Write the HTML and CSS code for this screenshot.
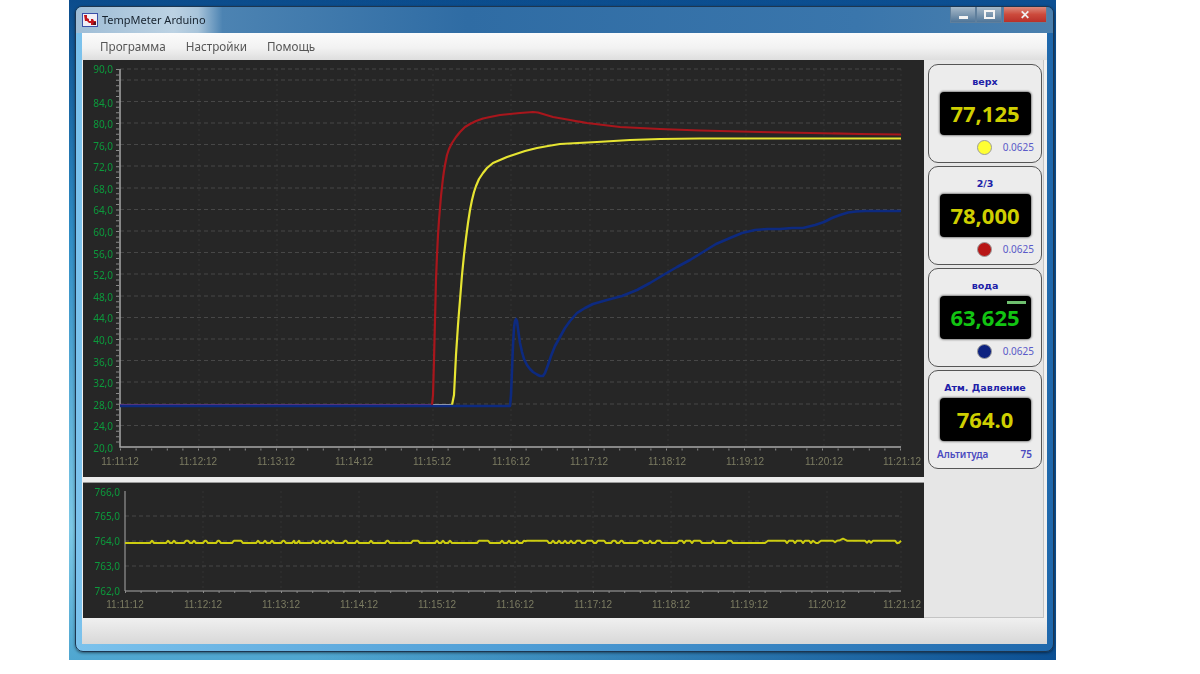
FILE: index.html
```html
<!DOCTYPE html>
<html lang="ru">
<head>
  <meta charset="UTF-8">
  <title>TempMeter Arduino</title>
  <link rel="stylesheet" href="styles.css">
</head>
<body>
  <div class="desktop">
    <div class="window">

      <!-- Title bar -->
      <div class="titlebar">
        <svg class="app-icon" width="16" height="14" viewBox="0 0 16 14">
          <rect x="0.5" y="0.5" width="15" height="13" fill="#f0eef6" stroke="#3a4fa8"/>
          <path d="M2 2h3v3l2 1v2h2V6h2l1 2h2v4H9v-2H7L5 8H3z" fill="#c4141c"/>
          <path d="M12 9h2v3h-3z" fill="#5a1420"/>
        </svg>
        <span class="title-text">TempMeter Arduino</span>
        <div class="caption-btns">
          <div class="cap-btn cap-min"><span class="glyph-min"></span></div>
          <div class="cap-btn cap-max"><span class="glyph-max"></span></div>
          <div class="cap-btn cap-close">✕</div>
        </div>
      </div>

      <div class="client">
        <!-- Menu -->
        <div class="menubar">
          <span class="menu-item">Программа</span>
          <span class="menu-item">Настройки</span>
          <span class="menu-item">Помощь</span>
        </div>

        <div class="main">
          <div class="charts">
            <!-- Temperature chart -->
            <svg class="chart" width="841" height="417" viewBox="83 60 841 417">
              <path class="grid-v" d="M199 69V447M277 69V447M355 69V447M433 69V447M511 69V447M590 69V447M668 69V447M746 69V447M824 69V447M901 69V447"/>
              <path class="grid-h" d="M120 69H901M120 80H901M120 101.500H901M120 123H901M120 144.500H901M120 166H901M120 188H901M120 209.500H901M120 231H901M120 252.500H901M120 274H901M120 296H901M120 317.500H901M120 339H901M120 360.500H901M120 382H901M120 404H901M120 425.500H901"/>
              <path class="axis" d="M120 69V447H901"/>
              <path class="ticks-y" d="M117.500 69V447"/>
              <path class="ticks-x" d="M120 449.500H901"/>

              <path class="trace-base" d="M120 404.500H433"/>
              <path class="trace-base-light" d="M433 404.500H453"/>
              <path class="trace red" d="M432 405L433 395 434 360 435 320 436 280 437 255 438 235 439 220 440 208 441 196 442 187 443 178 444 171 445 165 447 155 449 149 452 143 456 137 460 132 465 127 470 124 476 121 483 118.500 490 117 500 115 510 114 520 113 533 112 538 112.500 543 114 553 117 570 120 587 123 620 127 660 129 700 130.500 760 132 810 133 860 134 901 134.500"/>
              <path class="trace yellow" d="M452 405L454 395 455 375 456 355 457 340 458 325 459 312 460 300 462 275 464 255 466 238 468 223 470 210 472 200 474 192 476 186 479 179 483 173 487 168 493 163 500 160 507 157 513 155 525 151 537 148 548 146 560 144 578 143 597 142 630 140 660 139 700 138.500H901"/>
              <path class="trace blue" d="M120 406H510L511 395 512 370 513 345 514 328 515 321 516 319 517 321 518 329 519 336 520 343 522 352 524 359 527 365 530 369 533 372 537 374.500 540 376 543 376 545 373 548 365 551 356 555 346 560 337 565 328 570 321 577 313 585 308 593 304 607 300 622 296 637 290 650 283 665 274 677 267 690 260 703 252 716 244 730 238 742 233 755 230 767 229 780 229 792 228 803 228 815 225 824 222 832 218 840 215 848 212.500 856 211.500 865 211H901"/>

              <g class="lbl-y">
                <text x="113" y="73">90,0</text>
                <text x="113" y="107">84,0</text>
                <text x="113" y="128">80,0</text>
                <text x="113" y="150">76,0</text>
                <text x="113" y="171">72,0</text>
                <text x="113" y="193">68,0</text>
                <text x="113" y="214">64,0</text>
                <text x="113" y="236">60,0</text>
                <text x="113" y="258">56,0</text>
                <text x="113" y="279">52,0</text>
                <text x="113" y="301">48,0</text>
                <text x="113" y="322">44,0</text>
                <text x="113" y="344">40,0</text>
                <text x="113" y="366">36,0</text>
                <text x="113" y="387">32,0</text>
                <text x="113" y="409">28,0</text>
                <text x="113" y="430">24,0</text>
                <text x="113" y="452">20,0</text>
              </g>
              <g class="lbl-x">
                <text x="120" y="465">11:11:12</text>
                <text x="198" y="465">11:12:12</text>
                <text x="276" y="465">11:13:12</text>
                <text x="354" y="465">11:14:12</text>
                <text x="432" y="465">11:15:12</text>
                <text x="511" y="465">11:16:12</text>
                <text x="589" y="465">11:17:12</text>
                <text x="667" y="465">11:18:12</text>
                <text x="745" y="465">11:19:12</text>
                <text x="824" y="465">11:20:12</text>
                <text x="902" y="465">11:21:12</text>
              </g>
            </svg>

            <div class="splitter"></div>

            <!-- Pressure chart -->
            <svg class="chart" width="841" height="135" viewBox="83 483 841 135">
              <path class="grid-v" d="M203 491V591M281 491V591M359 491V591M437 491V591M515 491V591M593 491V591M671 491V591M749 491V591M827 491V591M901 491V591"/>
              <path class="grid-h" d="M125 516H901M125 541H901M125 566H901"/>
              <path class="axis-thin" d="M125 491V591H901"/>
              <path class="ticks-x" d="M125 592H901"/>
              <path class="trace-thin" d="M125 543H150l2-2.300 2 2.300H166l2-2.300 2 2.300H172l2-2.300 2 2.300H184l2-2.300H188l2 2.300H192l2-2.300 2 2.300H203l2-2.300H206l2 2.300H216l2-2.300H219l2 2.300H232l2-2.300H241l2 2.300H256l2-2.300 2 2.300H263l2-2.300 2 2.300H270l2-2.300 2 2.300H281l2-2.300H284l2 2.300H292l2-2.300 1 2.300H297l2-2.300 1 2.300H311l2-2.300 2 2.300H318l2-2.300 2 2.300H325l2-2.300 2 2.300H331l2-2.300 2 2.300H343l2-2.300H346l2 2.300H355l2-2.300 2 2.300H369l2-2.300 2 2.300H385l2-2.300H388l2 2.300H411l2-2.300H418l2 2.300H435l2-2.300 2 2.300H441l2-2.300 2 2.300H448l2-2.300 2 2.300H477l2-2.300H488l2 2.300H500l2-2.300 2 2.300H507l2-2.300 2 2.300H515l2-2.300 2 2.300H522l2-2.300 2 .500 1-.500H547l2 2.300H551l2-2.300 2 2.300H557l2-2.300 2 2.300H563l2-2.300 2 2.300H569l2-2.300 2 2.300H575l2-2.300H580l2 2.300H585l2-2.300H592l2 2.300H596l2-2.300H604l2 2.300H611l2-2.300H615l2 2.300H619l2-2.300H622l2 2.300H637l2-2.300H642l2 2.300H648l2-2.300 2 2.300H655l2-2.300H660l2 2.300H677l2-2.300H682l2 2.300 2-2.300H690l2 2.300 2-2.300H700l2 2.300H711l2-2.300 2 2.300H726l2-2.300H731l2 2.300H765l3-2.300H785l2 2.300 2-2.300H793l2 2.300 2-2.300H801l2 2.300 2-2.300H809l2 2.300 2-2.300 3 2.300H818l3-2.300H833l2 1.500 2-1.500 3-.500 3-1.500 3 1.500 1 .500H865l2 2 2-2 2 2 2-2H895l2 2.500 2-.500 2-2"/>

              <g class="lbl-y">
                <text x="120" y="496">766,0</text>
                <text x="120" y="520">765,0</text>
                <text x="120" y="545">764,0</text>
                <text x="120" y="570">763,0</text>
                <text x="120" y="595">762,0</text>
              </g>
              <g class="lbl-x">
                <text x="125" y="608">11:11:12</text>
                <text x="203" y="608">11:12:12</text>
                <text x="281" y="608">11:13:12</text>
                <text x="359" y="608">11:14:12</text>
                <text x="437" y="608">11:15:12</text>
                <text x="515" y="608">11:16:12</text>
                <text x="593" y="608">11:17:12</text>
                <text x="671" y="608">11:18:12</text>
                <text x="749" y="608">11:19:12</text>
                <text x="827" y="608">11:20:12</text>
                <text x="902" y="608">11:21:12</text>
              </g>
            </svg>
          </div>

          <!-- Sensor cards -->
          <div class="panel">
            <div class="card">
              <div class="card-title">верх</div>
              <div class="display">77,125</div>
              <div class="card-foot">
                <span class="led led-yellow"></span>
                <span class="res">0.0625</span>
              </div>
            </div>
            <div class="card">
              <div class="card-title">2/3</div>
              <div class="display">78,000</div>
              <div class="card-foot">
                <span class="led led-red"></span>
                <span class="res">0.0625</span>
              </div>
            </div>
            <div class="card">
              <div class="card-title">вода</div>
              <div class="display display-green">63,625<span class="heat-bar"></span></div>
              <div class="card-foot">
                <span class="led led-blue"></span>
                <span class="res">0.0625</span>
              </div>
            </div>
            <div class="card">
              <div class="card-title">Атм. Давление</div>
              <div class="display">764.0</div>
              <div class="card-foot card-foot-alt">
                <span class="alt-label">Альтитуда</span>
                <span class="alt-label">75</span>
              </div>
            </div>
          </div>
        </div>

        <div class="statusbar"></div>
      </div>
    </div>
  </div>
</body>
</html>
```

FILE: styles.css
```css
body {
  margin: 0;
  background-color: white;
  font-family: "Noto Sans", sans-serif;
}

.desktop {
  box-sizing: border-box;
  width: 987px;
  height: 660px;
  margin-left: 69px;
  padding: 6px 2px 8px 6px;
  background:
    linear-gradient(to right, rgba(12, 79, 146, 0) 25%, #0c4f92 100%),
    linear-gradient(to bottom, #0b4c8c 0%, #2f8cc4 35%, #7cc8e6 80%, #4fa6d0 100%);
}

/* whole window is slightly soft in the reference, it is a rescaled screenshot */
.window {
  box-sizing: border-box;
  height: 646px;
  display: flex;
  flex-direction: column;
  padding: 0 6px 7px 6px;
  border: 1px solid #1d3650;
  border-radius: 7px 7px 8px 8px;
  background: linear-gradient(to right, #7cc2ec 0%, #4f9ed6 45%, #1f68ac 100%);
  box-shadow: 0 1px 3px rgba(0, 0, 0, 0.5);
  filter: blur(0.4px);
}

.titlebar {
  height: 26px;
  flex-shrink: 0;
  display: flex;
  align-items: flex-start;
  margin: 0 -6px;
  padding: 0 6px;
  border-radius: 6px 6px 0 0;
  background: linear-gradient(to right, #9fbdd6 0%, #bcd2e3 10%, #a8c4da 12.500%, #4c83b2 15%, #2f6ca4 40%, #3a76ac 80%, #4b80ae 100%);
}

.app-icon {
  margin: 6px 4px 0 0;
}

.title-text {
  font-size: 11px;
  line-height: 26px;
  color: #16222e;
}

.caption-btns {
  display: flex;
  margin-left: auto;
  height: 16px;
}

.cap-btn {
  display: flex;
  align-items: center;
  justify-content: center;
  border: 1px solid #5f7f9c;
  border-top: none;
  box-sizing: border-box;
}

.cap-min, .cap-max {
  width: 26px;
  background: linear-gradient(to bottom, #a5b9ca 0%, #7d98b0 50%, #4f7598 100%);
}

.cap-close {
  width: 44px;
  margin-left: 1px;
  color: #f0f0f0;
  font-size: 12px;
  font-weight: bold;
  background: linear-gradient(to bottom, #dc8a7c 0%, #cc4a3c 50%, #b8302a 100%);
}

.glyph-min {
  width: 9px;
  height: 3px;
  margin-top: 6px;
  background-color: #f4f4f4;
}

.glyph-max {
  box-sizing: border-box;
  width: 11px;
  height: 9px;
  border: 2px solid #f4f4f4;
}

.client {
  flex: 1;
  min-height: 0;
  display: flex;
  flex-direction: column;
  background-color: #f0f0f0;
}

.menubar {
  box-sizing: border-box;
  height: 27px;
  flex-shrink: 0;
  display: flex;
  align-items: center;
  gap: 20px;
  padding: 0 0 2px 18px;
  background: linear-gradient(to bottom, #fbfbfb 0%, #f2f2f2 55%, #dedede 100%);
}

.menu-item {
  font-size: 11.700px;
  color: #555;
}

.main {
  flex: 1;
  min-height: 0;
  display: flex;
}

.charts {
  width: 841px;
  margin-left: 1px;
  flex-shrink: 0;
  background-color: #262626;
}

.chart {
  display: block;
  background-color: #262626;
}

.splitter {
  box-sizing: border-box;
  height: 6px;
  background-color: #ececec;
  border-bottom: 1px solid #9a9a9a;
}

.grid-v {
  stroke: #323232;
  stroke-width: 1;
  stroke-dasharray: 2 3;
  fill: none;
}

.grid-h {
  stroke: #474747;
  stroke-width: 1;
  stroke-dasharray: 4 3;
  fill: none;
}

.axis {
  stroke: #a8a8a8;
  stroke-width: 1.500;
  fill: none;
}

.axis-thin {
  stroke: #a8a8a8;
  stroke-width: 1;
  fill: none;
}

.ticks-y {
  stroke: #8a8a8a;
  stroke-width: 3;
  stroke-dasharray: 1 4.400;
  fill: none;
}

.ticks-x {
  stroke: #8a8a8a;
  stroke-width: 2;
  stroke-dasharray: 1 14.600;
  fill: none;
}

.trace {
  fill: none;
  stroke-width: 2.200;
  stroke-linejoin: round;
}

.trace.red { stroke: #a8161c; }
.trace.yellow { stroke: #e6e432; }
.trace.blue { stroke: #0d2a80; stroke-width: 2.600; }

.trace-base {
  fill: none;
  stroke: #6a3a80;
  stroke-width: 1;
}

.trace-base-light {
  fill: none;
  stroke: #b8b8b8;
  stroke-width: 1;
}

.trace-thin {
  fill: none;
  stroke: #cccc10;
  stroke-width: 2;
  stroke-linejoin: round;
}

.lbl-y text {
  font-family: "Noto Sans", sans-serif;
  font-size: 10px;
  fill: #0c9a3c;
  text-anchor: end;
}

.lbl-x text {
  font-family: "Liberation Sans", sans-serif;
  font-size: 10px;
  fill: #7c7c62;
  text-anchor: middle;
}

.panel {
  box-sizing: border-box;
  width: 120px;
  flex-shrink: 0;
  display: flex;
  flex-direction: column;
  gap: 3px;
  padding: 4px 2px 0 4px;
  background-color: #e6e6e6;
  border-right: 1px solid #c4c4c4;
  border-bottom: 1px solid #c4c4c4;
}

.card {
  box-sizing: border-box;
  width: 114px;
  height: 99px;
  display: flex;
  flex-direction: column;
  align-items: center;
  border: 1px solid #555;
  border-radius: 10px;
  background-color: #ececec;
  flex-shrink: 0;
}

.card-title {
  height: 14px;
  margin-top: 10px;
  font-family: "DejaVu Sans", sans-serif;
  font-size: 9.500px;
  font-weight: bold;
  line-height: 14px;
  color: #2020a8;
}

.display {
  position: relative;
  box-sizing: border-box;
  width: 91px;
  height: 43px;
  margin-top: 3px;
  text-align: center;
  font-size: 22px;
  font-weight: bold;
  line-height: 42px;
  color: #cfcf00;
  background-color: black;
  border-radius: 4px;
  box-shadow: 0 0 2px 1px #8a8a8a;
}

.display-green {
  color: #12c412;
}

.heat-bar {
  position: absolute;
  top: 5px;
  right: 5px;
  width: 19px;
  height: 3px;
  background-color: #6fbf6f;
}

.card-foot {
  align-self: stretch;
  height: 16px;
  margin-top: 4px;
  display: flex;
  align-items: center;
  justify-content: flex-end;
  gap: 11px;
  padding-right: 7px;
}

.card-foot-alt {
  height: 14px;
  margin-top: 6px;
  justify-content: space-between;
  padding: 0 9px 0 8px;
}

.led {
  box-sizing: border-box;
  width: 15px;
  height: 15px;
  border-radius: 50%;
  border: 1px solid #9c9c9c;
}

.led-yellow { background-color: #ffff33; }
.led-red { background-color: #b81616; }
.led-blue { background-color: #0d2280; }

.res {
  font-size: 10px;
  color: #5a5ac8;
}

.alt-label {
  font-size: 10px;
  font-weight: 600;
  color: #4a4ac0;
}

.statusbar {
  height: 26px;
  flex-shrink: 0;
  background: linear-gradient(to bottom, #f0f0f0 0%, #d8d8d8 100%);
}
```
